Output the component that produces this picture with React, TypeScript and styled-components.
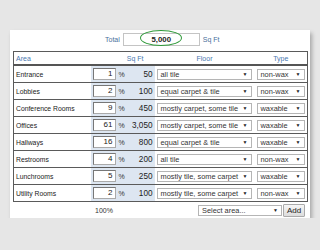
import React from "react";
import styled, { createGlobalStyle } from "styled-components";

interface AreaRow {
  name: string;
  pct: number;
  sqft: string;
  floor: string;
  type: string;
}

const rows: AreaRow[] = [
  { name: "Entrance", pct: 1, sqft: "50", floor: "all tile", type: "non-wax" },
  { name: "Lobbies", pct: 2, sqft: "100", floor: "equal carpet & tile", type: "non-wax" },
  { name: "Conference Rooms", pct: 9, sqft: "450", floor: "mostly carpet, some tile", type: "waxable" },
  { name: "Offices", pct: 61, sqft: "3,050", floor: "mostly carpet, some tile", type: "waxable" },
  { name: "Hallways", pct: 16, sqft: "800", floor: "equal carpet & tile", type: "waxable" },
  { name: "Restrooms", pct: 4, sqft: "200", floor: "all tile", type: "non-wax" },
  { name: "Lunchrooms", pct: 5, sqft: "250", floor: "mostly tile, some carpet", type: "waxable" },
  { name: "Utility Rooms", pct: 2, sqft: "100", floor: "mostly tile, some carpet", type: "non-wax" },
];

const GlobalStyle = createGlobalStyle`
  html, body {
    margin: 0;
    padding: 0;
    background: #e6e6e6;
    font-family: "Liberation Sans", Arial, sans-serif;
  }
`;

const Page = styled.div`
  padding: 30px 0 0 10px;
`;

const Card = styled.div`
  width: 300px;
  height: 188px;
  box-sizing: border-box;
  padding: 3px 3px 0 3px;
  background: #fff;
  box-shadow: 2px 3px 4px rgba(0, 0, 0, 0.28);
`;

const TotalRow = styled.div`
  display: flex;
  align-items: center;
  height: 13px;
  padding-left: 92px;
  margin-bottom: 5px;
  gap: 3px;
`;

const Label = styled.span`
  font-size: 7px;
  color: #4a6f9c;
`;

const TotalField = styled.div`
  position: relative;
  width: 75px;
  height: 11px;
  border: 1px solid #c4c4c4;
  display: flex;
  align-items: center;
  justify-content: center;
  font-size: 7.8px;
  font-weight: bold;
  color: #222;
`;

const Ellipse = styled.div`
  position: absolute;
  left: 16px;
  top: -4px;
  width: 40px;
  height: 14px;
  border: 1.5px solid #2f9a3a;
  border-radius: 50%;
`;

const Table = styled.table`
  width: 294px;
  border-collapse: collapse;
  border: 1px solid #5a5a5a;
  table-layout: fixed;
`;

const HeadCell = styled.th<{ $align?: string; $padRight?: number }>`
  height: 12px;
  padding: 0 ${(p) => p.$padRight ?? 2}px 0 2px;
  font-size: 7px;
  font-weight: normal;
  color: #4a78b0;
  text-align: ${(p) => p.$align || "center"};
  border-bottom: 2px solid #555;
`;

const Row = styled.tr`
  border-bottom: 1px solid #5a5a5a;
`;

const NameCell = styled.td`
  height: 16px;
  padding: 0 2px;
  font-size: 6.8px;
  color: #222;
`;

const SqFtCell = styled.td`
  background: #dde6f1;
  padding: 0 2px 0 2px;
`;

const SqFtInner = styled.div`
  display: flex;
  align-items: center;
`;

const PctInput = styled.div`
  width: 19px;
  height: 10px;
  box-sizing: content-box;
  border: 1px solid #aaa;
  border-top-color: #777;
  border-left-color: #777;
  background: #fff;
  font-size: 8px;
  line-height: 10px;
  text-align: right;
  padding-right: 2px;
  color: #222;
`;

const Pct = styled.span`
  font-size: 7px;
  color: #333;
  margin-left: 3px;
`;

const SqFtValue = styled.span`
  margin-left: auto;
  font-size: 8.2px;
  color: #222;
`;

const PlainCell = styled.td`
  padding: 0 2px;
`;

const SelectBox = styled.div<{ $width: number }>`
  width: ${(p) => p.$width}px;
  height: 11px;
  box-sizing: border-box;
  border: 1px solid #b5b5b5;
  background: #fff;
  display: flex;
  align-items: center;
  padding: 0 3px;
  font-size: 7.4px;
  color: #333;
`;

const Arrow = styled.span`
  margin-left: auto;
  font-size: 5px;
  color: #222;
`;

const Footer = styled.div`
  display: flex;
  align-items: center;
  height: 14px;
  padding-top: 1px;
`;

const FooterPct = styled.span`
  margin-left: 82px;
  font-size: 7px;
  color: #333;
`;

const FooterSelect = styled(SelectBox)`
  margin-left: auto;
`;

const AddButton = styled.button`
  height: 13px;
  width: 22px;
  margin: 0 2px 0 1px;
  padding: 0;
  border: 1px solid #aaa;
  border-radius: 1px;
  background: linear-gradient(#f6f6f6, #dcdcdc);
  font-family: "Liberation Sans", Arial, sans-serif;
  font-size: 8px;
  color: #222;
`;

const Select: React.FC<{ width: number; value: string }> = ({ width, value }) => (
  <SelectBox $width={width}>
    {value}
    <Arrow>▼</Arrow>
  </SelectBox>
);

export default function App() {
  return (
    <Page>
      <GlobalStyle />
      <Card>
        <TotalRow>
          <Label>Total</Label>
          <TotalField>
            5,000
            <Ellipse />
          </TotalField>
          <Label>Sq Ft</Label>
        </TotalRow>
        <Table>
          <colgroup>
            <col style={{ width: 77 }} />
            <col style={{ width: 64 }} />
            <col style={{ width: 100 }} />
            <col style={{ width: 53 }} />
          </colgroup>
          <thead>
            <tr>
              <HeadCell $align="left">Area</HeadCell>
              <HeadCell $align="right" $padRight={11}>
                Sq Ft
              </HeadCell>
              <HeadCell>Floor</HeadCell>
              <HeadCell>Type</HeadCell>
            </tr>
          </thead>
          <tbody>
            {rows.map((r) => (
              <Row key={r.name}>
                <NameCell>{r.name}</NameCell>
                <SqFtCell>
                  <SqFtInner>
                    <PctInput>{r.pct}</PctInput>
                    <Pct>%</Pct>
                    <SqFtValue>{r.sqft}</SqFtValue>
                  </SqFtInner>
                </SqFtCell>
                <PlainCell>
                  <Select width={95} value={r.floor} />
                </PlainCell>
                <PlainCell>
                  <Select width={48} value={r.type} />
                </PlainCell>
              </Row>
            ))}
          </tbody>
        </Table>
        <Footer>
          <FooterPct>100%</FooterPct>
          <FooterSelect $width={84}>
            Select area...
            <Arrow>▼</Arrow>
          </FooterSelect>
          <AddButton>Add</AddButton>
        </Footer>
      </Card>
    </Page>
  );
}
